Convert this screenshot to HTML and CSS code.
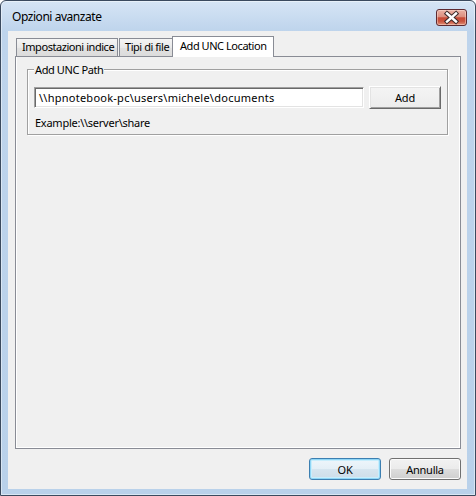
FILE: index.html
```html
<!DOCTYPE html>
<html lang="it">
<head>
<meta charset="utf-8">
<title>Opzioni avanzate</title>
<link rel="stylesheet" href="styles.css">
</head>
<body>
<div class="window">
  <div class="titlebar">
    <span class="title">Opzioni avanzate</span>
    <div class="close">
      <svg width="31" height="17" viewBox="0 0 31 17">
        <path d="M11 4.5 L20 12.5 M20 4.5 L11 12.5" stroke="#3a2a2a" stroke-width="4.4" stroke-linecap="square" fill="none"/>
        <path d="M11 4.5 L20 12.5 M20 4.5 L11 12.5" stroke="#ffffff" stroke-width="2.4" stroke-linecap="square" fill="none"/>
      </svg>
    </div>
  </div>
  <div class="client">
    <div class="tabcontrol">
      <div class="tabs">
        <div class="tab t1">Impostazioni indice</div>
        <div class="tab t2">Tipi di file</div>
        <div class="tab sel">Add UNC Location</div>
      </div>
      <div class="panel">
        <fieldset class="group">
          <legend>Add UNC Path</legend>
          <div class="row">
            <div class="input">\\hpnotebook-pc\users\michele\documents</div>
            <div class="btn3d">Add</div>
          </div>
          <div class="example">Example:\\server\share</div>
        </fieldset>
      </div>
    </div>
    <div class="buttons">
      <div class="btn default">OK</div>
      <div class="btn">Annulla</div>
    </div>
  </div>
</div>
</body>
</html>
```

FILE: styles.css
```css
* { box-sizing: border-box; }
html, body { margin: 0; padding: 0; }
body {
  width: 476px;
  height: 496px;
  overflow: hidden;
  background: #fff;
  font-family: "Noto Sans", "Open Sans", sans-serif;
  font-size: 11px;
  letter-spacing: -0.25px;
  color: #000;
}
.window {
  width: 476px;
  height: 496px;
  border: 1px solid #3b4a5e;
  border-radius: 6px 6px 0 0;
  background: linear-gradient(#d6e5f5 0px, #bed4ec 30px, #b9d1ea 100%);
  box-shadow: inset 0 0 0 1px rgba(255,255,255,0.45);
  padding: 0 8px 6px 7px;
  display: flex;
  flex-direction: column;
}
.titlebar {
  height: 30px;
  display: flex;
  align-items: flex-start;
  justify-content: space-between;
  padding-left: 4px;
}
.title {
  font-size: 12px;
  line-height: 16px;
  letter-spacing: -0.45px;
  margin-top: 8px;
}
.close {
  width: 31px;
  height: 17px;
  margin-top: 8px;
  border: 1px solid #5e2a30;
  border-radius: 3px;
  background: linear-gradient(#eab1a4 0%, #dc8f7f 45%, #c74a36 52%, #c9553f 75%, #e09078 100%);
  box-shadow: inset 0 0 0 1px rgba(255,230,220,0.45);
  display: flex;
}
.close svg { display: block; margin: -1px; }
.client {
  flex: 1;
  background: #f0f0f0;
  padding: 5px 6px 9px 7px;
  display: flex;
  flex-direction: column;
}
.tabcontrol {
  flex: 1;
  display: flex;
  flex-direction: column;
}
.tabs {
  height: 20px;
  display: flex;
  align-items: flex-end;
  padding-left: 1px;
  position: relative;
  z-index: 1;
  letter-spacing: -0.45px;
}
.tab {
  height: 18px;
  border: 1px solid #898c95;
  border-bottom: none;
  background: linear-gradient(#f5f5f5, #e9e9e9 50%, #e1e1e1 51%, #dcdcdc);
  padding-left: 5px;
  line-height: 16px;
  white-space: nowrap;
  overflow: hidden;
}
.t1 { width: 102px; }
.t2 { width: 56px; margin-left: 1px; }
.sel {
  width: 102px;
  height: 21px;
  margin-left: -3px;
  margin-bottom: -1px;
  background: #fff;
  padding-left: 7px;
  line-height: 17px;
}
.panel {
  flex: 1;
  border: 1px solid #898c95;
  background: #f0f0f0;
  box-shadow: inset 1px -1px 0 #fff, inset -1px 0 0 #fff;
  display: flex;
  flex-direction: column;
}
.group {
  margin: 5px 12px 0 11px;
  padding: 0 6px 4px 6px;
  border: 1px solid #a0a0a0;
  box-shadow: inset 1px 1px 0 #fff, 1px 1px 0 #fff;
  min-width: 0;
}
.group legend {
  padding: 0 1px;
  line-height: 15px;
  letter-spacing: -0.4px;
  background: #f0f0f0;
}
.row {
  margin-top: 9px;
  height: 23px;
  display: flex;
  align-items: center;
  gap: 5px;
}
.input {
  width: 330px;
  height: 21px;
  background: #fff;
  border: 1px solid;
  border-color: #a0a0a0 #fff #fff #a0a0a0;
  box-shadow: inset 1px 1px 0 #696969, inset -1px -1px 0 #e3e3e3;
  padding-left: 4px;
  line-height: 19px;
  letter-spacing: 0.25px;
  white-space: nowrap;
  overflow: hidden;
}
.btn3d {
  width: 72px;
  height: 23px;
  border: 1px solid;
  border-color: #fff #696969 #696969 #fff;
  box-shadow: inset 1px 1px 0 #e3e3e3, inset -1px -1px 0 #a0a0a0;
  background: linear-gradient(#f4f4f4, #ececec);
  display: flex;
  align-items: center;
  justify-content: center;
}
.example {
  margin-top: 6px;
  line-height: 15px;
  padding-left: 1px;
}
.buttons {
  margin-top: 9px;
  display: flex;
  justify-content: flex-end;
  gap: 8px;
}
.btn {
  width: 72px;
  height: 22px;
  border: 1px solid #707070;
  border-radius: 3px;
  background: linear-gradient(#f2f2f2, #ebebeb 50%, #dddddd 51%, #cfcfcf);
  box-shadow: inset 0 0 0 1px #fbfbfb;
  display: flex;
  align-items: center;
  justify-content: center;
}
.btn.default {
  border-color: #3c7fb1;
  background: linear-gradient(#eef6fb, #e4eff6 50%, #d6e5ef 51%, #cddde9);
  box-shadow: inset 0 0 0 1px #8fd6f6, inset 0 0 0 2px #c9eefc;
}
```
